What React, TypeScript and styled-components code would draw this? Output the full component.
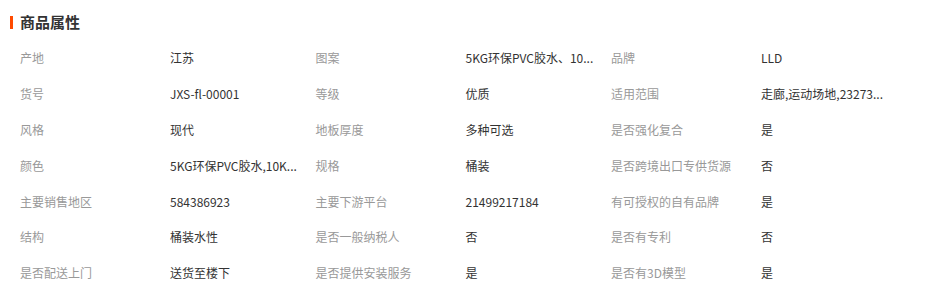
import React from "react";
import styled, { createGlobalStyle } from "styled-components";

const Global = createGlobalStyle`
  html, body { margin: 0; padding: 0; background: #fff; }
  body { font-family: "Noto Sans CJK SC", "Microsoft YaHei", sans-serif; }
`;

const Wrap = styled.div`
  width: 928px;
  padding-top: 13px;
`;

const Title = styled.h3`
  display: flex;
  align-items: center;
  gap: 7px;
  margin: 0 0 9px 10px;
  height: 18px;
  font-size: 15px;
  font-weight: bold;
  color: #333;
  line-height: 18px;
`;

const Bar = styled.span`
  width: 3px;
  height: 13px;
  background: #ff4a00;
`;

const Grid = styled.div`
  display: grid;
  grid-template-columns: repeat(3, 295.5px);
  padding-left: 20px;
`;

const Cell = styled.div`
  display: flex;
  height: 35.8px;
  align-items: center;
  font-size: 12px;
`;

const Label = styled.span`
  width: 150px;
  flex: none;
  color: #999;
  white-space: nowrap;
`;

const Value = styled.span`
  color: #333;
  white-space: nowrap;
`;

const rows: [string, string][] = [
  ["产地", "江苏"],
  ["图案", "5KG环保PVC胶水、10..."],
  ["品牌", "LLD"],
  ["货号", "JXS-fl-00001"],
  ["等级", "优质"],
  ["适用范围", "走廊,运动场地,23273..."],
  ["风格", "现代"],
  ["地板厚度", "多种可选"],
  ["是否强化复合", "是"],
  ["颜色", "5KG环保PVC胶水,10K..."],
  ["规格", "桶装"],
  ["是否跨境出口专供货源", "否"],
  ["主要销售地区", "584386923"],
  ["主要下游平台", "21499217184"],
  ["有可授权的自有品牌", "是"],
  ["结构", "桶装水性"],
  ["是否一般纳税人", "否"],
  ["是否有专利", "否"],
  ["是否配送上门", "送货至楼下"],
  ["是否提供安装服务", "是"],
  ["是否有3D模型", "是"],
];

export default function App() {
  return (
    <Wrap>
      <Global />
      <Title>
        <Bar />
        商品属性
      </Title>
      <Grid>
        {rows.map(([k, v], i) => (
          <Cell key={i}>
            <Label>{k}</Label>
            <Value>{v}</Value>
          </Cell>
        ))}
      </Grid>
    </Wrap>
  );
}
